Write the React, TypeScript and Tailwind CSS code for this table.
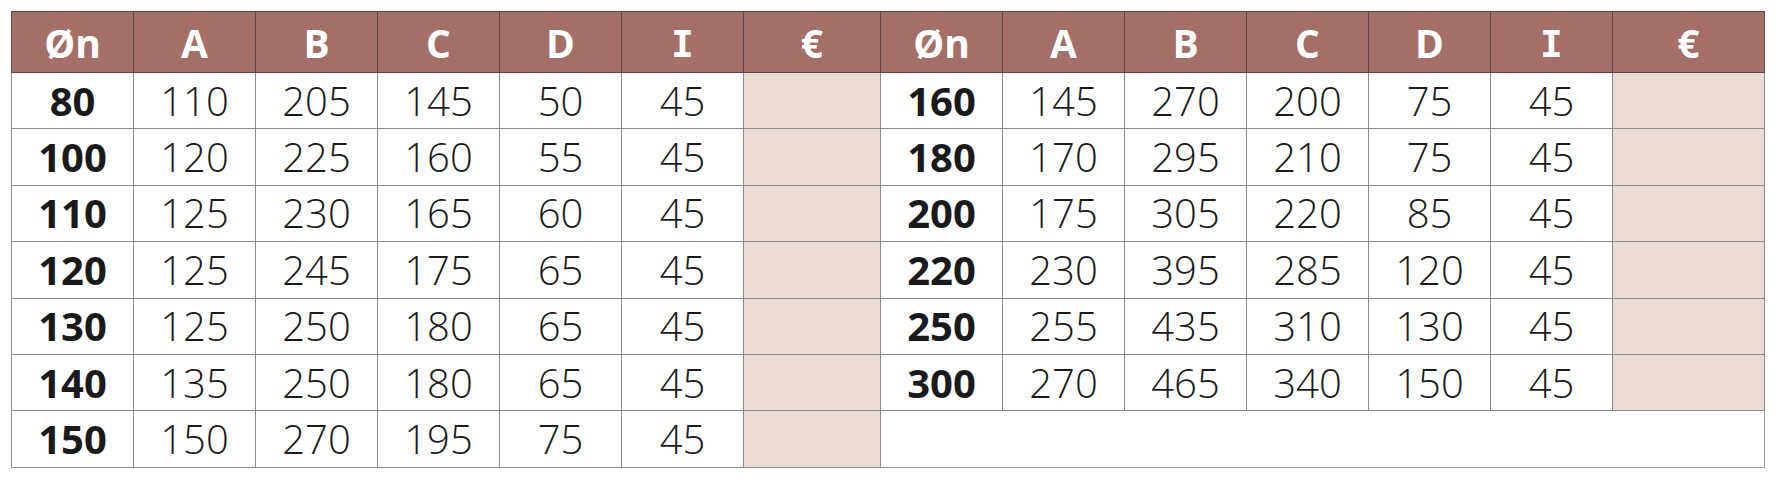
const headers = ["Øn", "A", "B", "C", "D", "I", "€"]

const left = [
    ["80", "110", "205", "145", "50", "45"],
    ["100", "120", "225", "160", "55", "45"],
    ["110", "125", "230", "165", "60", "45"],
    ["120", "125", "245", "175", "65", "45"],
    ["130", "125", "250", "180", "65", "45"],
    ["140", "135", "250", "180", "65", "45"],
    ["150", "150", "270", "195", "75", "45"],
]

const right = [
    ["160", "145", "270", "200", "75", "45"],
    ["180", "170", "295", "210", "75", "45"],
    ["200", "175", "305", "220", "85", "45"],
    ["220", "230", "395", "285", "120", "45"],
    ["250", "255", "435", "310", "130", "45"],
    ["300", "270", "465", "340", "150", "45"],
]

function HeadCell({ label, wide }: { label: string; wide?: string }) {
    return (
        <th
            className={`h-[61px] border border-[#5e4643] p-0 text-center align-middle text-[39px] leading-none font-bold text-white ${wide ?? "w-[122px]"}`}
        >
            {label === "I" ? (
                <span className="font-['DejaVu_Sans_Mono',monospace] text-[38px] font-bold">I</span>
            ) : (
                label
            )}
        </th>
    )
}

// one half of a body row: 6 values + empty price cell
function Half({ values }: { values?: string[] }) {
    if (!values) {
        return <td colSpan={7} className="border border-[#9a9a9a] bg-white" />
    }
    return (
        <>
            {values.map((v, i) => (
                <td
                    key={i}
                    className={`border border-[#8c8c8c] p-0 text-center align-middle text-[40px] leading-none text-[#1a1a1a] ${
                        i === 0 ? "font-bold" : "font-[350]"
                    }`}
                >
                    {v}
                </td>
            ))}
            <td className="border border-[#8c8c8c] bg-[#eadbd4] p-0" />
        </>
    )
}

export default function App() {
    return (
        <div className="h-[484px] w-[1778px] bg-white pl-[11px] pt-[11px] font-['Open_Sans','Noto_Sans',sans-serif]">
            <table className="table-fixed border-collapse">
                <thead>
                    <tr className="bg-[#a36f67]">
                        {headers.map((h, i) => (
                            <HeadCell key={"l" + i} label={h} wide={i === 6 ? "w-[137px]" : undefined} />
                        ))}
                        {headers.map((h, i) => (
                            <HeadCell key={"r" + i} label={h} wide={i === 6 ? "w-[152px]" : undefined} />
                        ))}
                    </tr>
                </thead>
                <tbody>
                    {left.map((row, r) => (
                        <tr key={r} className="h-[56.4px]">
                            <Half values={row} />
                            <Half values={right[r]} />
                        </tr>
                    ))}
                </tbody>
            </table>
        </div>
    )
}
